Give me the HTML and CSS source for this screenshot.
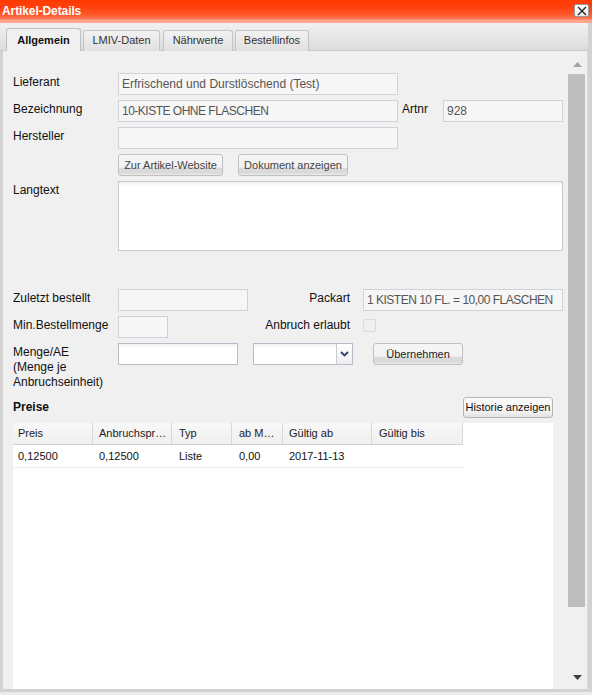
FILE: index.html
```html
<!DOCTYPE html>
<html lang="de">
<head>
<meta charset="utf-8">
<title>Artikel-Details</title>
<link rel="stylesheet" href="styles.css">
</head>
<body>
<div class="win">
  <div class="titlebar">
    <span class="title">Artikel-Details</span>
    <span class="close"><svg width="10" height="10" viewBox="0 0 10 10"><path d="M1 1L9 9M9 1L1 9" stroke="#222" stroke-width="1.3" fill="none"/></svg></span>
  </div>
  <div class="frame">
    <div class="tabstrip">
      <div class="tab active">Allgemein</div>
      <div class="tab">LMIV-Daten</div>
      <div class="tab">Nährwerte</div>
      <div class="tab">Bestellinfos</div>
    </div>
    <div class="panel">
      <div class="content">
        <div class="row">
          <span class="lbl">Lieferant</span>
          <input class="fld ro w280" readonly value="Erfrischend und Durstlöschend (Test)">
        </div>
        <div class="row">
          <span class="lbl">Bezeichnung</span>
          <input class="fld ro w280 caps" readonly value="10-KISTE OHNE FLASCHEN">
          <span class="lbl lbl-artnr">Artnr</span>
          <input class="fld ro w120" readonly value="928">
        </div>
        <div class="row">
          <span class="lbl">Hersteller</span>
          <input class="fld ro w280" readonly value="">
        </div>
        <div class="row">
          <span class="lbl"></span>
          <button class="btn btn-web">Zur Artikel-Website</button>
          <button class="btn btn-doc">Dokument anzeigen</button>
        </div>
        <div class="row row-text">
          <span class="lbl">Langtext</span>
          <textarea class="area"></textarea>
        </div>
        <div class="row">
          <span class="lbl">Zuletzt bestellt</span>
          <input class="fld ro w130" readonly value="">
          <span class="lbl lbl-right w115">Packart</span>
          <input class="fld ro w200 caps" readonly value="1 KISTEN 10 FL. = 10,00 FLASCHEN">
        </div>
        <div class="row">
          <span class="lbl">Min.Bestellmenge</span>
          <input class="fld ro w50" readonly value="">
          <span class="lbl lbl-right w195">Anbruch erlaubt</span>
          <span class="check"></span>
        </div>
        <div class="row row-menge">
          <span class="lbl">Menge/AE<br>(Menge je<br>Anbruchseinheit)</span>
          <input class="fld ed w120" value="">
          <span class="combo">
            <input class="combo-in" value="">
            <span class="trigger"><svg width="9" height="6" viewBox="0 0 9 6"><path d="M1 1L4.5 4.5L8 1" stroke="#2f3f66" stroke-width="1.8" fill="none"/></svg></span>
          </span>
          <button class="btn btn-take">Übernehmen</button>
        </div>
        <div class="row row-preise">
          <span class="section">Preise</span>
          <button class="btn btn-hist">Historie anzeigen</button>
        </div>
        <div class="grid">
          <div class="grid-head">
            <div class="c c1">Preis</div>
            <div class="c c2">Anbruchspr…</div>
            <div class="c c3">Typ</div>
            <div class="c c4">ab M…</div>
            <div class="c c5">Gültig ab</div>
            <div class="c c6">Gültig bis</div>
          </div>
          <div class="grid-row">
            <div class="c c1">0,12500</div>
            <div class="c c2">0,12500</div>
            <div class="c c3">Liste</div>
            <div class="c c4">0,00</div>
            <div class="c c5">2017-11-13</div>
            <div class="c c6"></div>
          </div>
        </div>
      </div>
      <div class="vscroll">
        <svg class="arr-up" width="9" height="5" viewBox="0 0 9 5"><path d="M0 5L4.5 0L9 5Z" fill="#a3a3a3"/></svg>
        <div class="thumb"></div>
        <div class="spacer"></div>
        <svg class="arr-down" width="9" height="5" viewBox="0 0 9 5"><path d="M0 0L9 0L4.5 5Z" fill="#404040"/></svg>
      </div>
    </div>
  </div>
</div>
</body>
</html>
```
FILE: styles.css
```css
html, body {
  margin: 0;
  padding: 0;
  background: #ebebeb;
}
body {
  font-family: "Liberation Sans", Arial, sans-serif;
  font-size: 12px;
  color: #111;
}
.win {
  width: 592px;
}
.titlebar {
  height: 23px;
  box-sizing: border-box;
  display: flex;
  align-items: flex-start;
  justify-content: space-between;
  background: linear-gradient(to bottom, #ff3a00 0%, #ff4210 35%, #ff5a2c 65%, #ff7a58 82%, #ffa28c 88%, #ffa892 100%);
}
.title {
  color: #fff;
  font-weight: bold;
  font-size: 12px;
  line-height: 15px;
  padding: 4px 0 0 2px;
  letter-spacing: -0.1px;
}
.close {
  width: 15px;
  height: 13px;
  margin: 4px 3px 0 0;
  box-sizing: border-box;
  border: 1px solid #9a9a9a;
  border-radius: 2px;
  background: linear-gradient(#ffffff, #ececec);
  display: flex;
  align-items: center;
  justify-content: center;
}
.frame {
  background: #d2d2d2;
  padding: 0 4px 3px 3px;
}
.tabstrip {
  height: 28px;
  box-sizing: border-box;
  border-bottom: 1px solid #cbcbcb;
  background: linear-gradient(to bottom, #f1f1f1, #dcdcdc);
  display: flex;
  align-items: flex-end;
  padding-left: 6px;
  margin-left: -3px;
}
.tab {
  height: 21px;
  box-sizing: border-box;
  border: 1px solid #c4c4c4;
  border-bottom: none;
  border-radius: 3px 3px 0 0;
  background: linear-gradient(to bottom, #f2f2f2, #e0e0e0);
  font-size: 11px;
  line-height: 19px;
  color: #333;
  text-align: center;
  margin-bottom: -1px;
}
.tab:nth-child(1) { width: 75px; }
.tab:nth-child(2) { width: 77px; margin-left: 2px; }
.tab:nth-child(3) { width: 70px; margin-left: 3px; }
.tab:nth-child(4) { width: 74px; margin-left: 2px; }
.tab.active {
  height: 23px;
  background: #f0f0f0;
  font-weight: bold;
  color: #111;
  line-height: 22px;
  border-color: #c0c0c0;
}
.panel {
  height: 638px;
  display: flex;
  background: #f0f0f0;
}
.content {
  width: 564px;
  box-sizing: border-box;
  padding: 22px 14px 0 10px;
  display: flex;
  flex-direction: column;
}
.row {
  display: flex;
  align-items: flex-start;
  min-height: 22px;
  margin-bottom: 5px;
}
.lbl {
  width: 105px;
  flex: none;
  padding-top: 2px;
  line-height: 15px;
  color: #111;
  font-size: 12px;
}
.lbl-artnr {
  width: 45px;
  padding-left: 4px;
  box-sizing: border-box;
}
.lbl-right {
  text-align: right;
  padding-right: 13px;
  box-sizing: border-box;
}
.w115 { width: 115px; }
.w195 { width: 195px; }
.fld {
  height: 22px;
  box-sizing: border-box;
  margin: 0;
  padding: 0 3px;
  font-family: "Liberation Sans", Arial, sans-serif;
  font-size: 12px;
  color: #555;
  outline: none;
  flex: none;
}
.caps {
  letter-spacing: -0.5px;
}
.ro {
  border: 1px solid #d0d2da;
  background: #f6f6f6;
}
.ed {
  border: 1px solid #b8bbc8;
  background: linear-gradient(to bottom, #f0f0f0 0, #ffffff 4px, #ffffff 100%);
}
.w280 { width: 280px; }
.w120 { width: 120px; }
.w130 { width: 130px; }
.w200 { width: 200px; }
.w50 { width: 50px; }
.btn {
  height: 22px;
  box-sizing: border-box;
  border: 1px solid #c0c0c0;
  border-radius: 3px;
  background: linear-gradient(to bottom, #f6f6f6 0%, #f2f2f2 62%, #dadada 64%, #dadada 90%, #ececec 100%);
  font-family: "Liberation Sans", Arial, sans-serif;
  font-size: 11px;
  color: #444;
  padding: 0;
  margin: 0;
  flex: none;
  line-height: 19px;
}
.btn-web { width: 105px; }
.btn-doc { width: 110px; margin-left: 15px; }
.btn-take { width: 90px; margin-left: 20px; color: #222; }
.btn-hist {
  width: 90px;
  margin-left: auto;
  color: #111;
  background: linear-gradient(to bottom, #fbfbfb 0%, #f3f3f3 70%, #e2e2e2 100%);
  border-color: #b5b5b5;
}
.row-text { margin-bottom: 38px; }
.area {
  width: 445px;
  height: 70px;
  box-sizing: border-box;
  border: 1px solid #c6c8d2;
  background: linear-gradient(to bottom, #f0f0f0 0, #ffffff 5px, #ffffff 100%);
  margin: 0;
  resize: none;
  outline: none;
  flex: none;
}
.check {
  width: 13px;
  height: 13px;
  box-sizing: border-box;
  margin-top: 3px;
  border: 1px solid #dadada;
  border-radius: 2px;
  background: #efefef;
  flex: none;
}
.row-menge { margin-bottom: 7px; }
.combo {
  display: flex;
  width: 100px;
  height: 22px;
  box-sizing: border-box;
  border: 1px solid #b8bbc8;
  margin-left: 15px;
  background: #fff;
  flex: none;
}
.combo-in {
  width: 82px;
  height: 20px;
  box-sizing: border-box;
  border: none;
  margin: 0;
  padding: 0 3px;
  background: linear-gradient(to bottom, #f0f0f0 0, #ffffff 4px, #ffffff 100%);
  outline: none;
}
.trigger {
  width: 16px;
  height: 20px;
  box-sizing: border-box;
  border-left: 1px solid #c8cad4;
  background: linear-gradient(to bottom, #ffffff, #eeeeee);
  display: flex;
  align-items: center;
  justify-content: center;
}
.row-preise {
  height: 21px;
  min-height: 21px;
  align-items: flex-start;
  margin-bottom: 5px;
}
.row-preise .btn-hist { height: 21px; }
.section {
  font-weight: bold;
  font-size: 12px;
  line-height: 15px;
  padding-top: 3px;
  color: #111;
}
.grid {
  flex: 1;
  background: #fff;
  width: 540px;
  font-size: 11px;
}
.grid-head, .grid-row {
  display: flex;
  width: 450px;
}
.grid-head {
  height: 21px;
  border-bottom: 1px solid #d2d2d2;
  background: linear-gradient(to bottom, #f8f8f8, #efefef);
  color: #222;
}
.grid-head .c {
  border-right: 1px solid #d8d8d8;
  line-height: 21px;
}
.grid-row {
  height: 22px;
  border-bottom: 1px solid #ececec;
  color: #111;
  width: 451px;
}
.grid-row .c {
  line-height: 22px;
}
.c {
  box-sizing: border-box;
  padding-left: 5px;
  white-space: nowrap;
  overflow: hidden;
  flex: none;
}
.c1 { width: 80px; }
.c2 { width: 79px; padding-left: 6px; }
.c3 { width: 60px; padding-left: 7px; }
.c4 { width: 51px; padding-left: 7px; }
.c5 { width: 89px; padding-left: 6px; }
.c6 { width: 91px; padding-left: 7px; }
.vscroll {
  width: 21px;
  background: #f0f0f0;
  display: flex;
  flex-direction: column;
  align-items: flex-start;
  padding: 11px 0 9px 1px;
  box-sizing: border-box;
  border-right: 1px solid #dcdcdc;
}
.arr-up { margin-left: 5px; flex: none; }
.thumb {
  width: 17px;
  height: 533px;
  margin-top: 7px;
  background: #bebebe;
  flex: none;
}
.spacer { flex: 1; }
.arr-down { margin-left: 5px; flex: none; }
```
